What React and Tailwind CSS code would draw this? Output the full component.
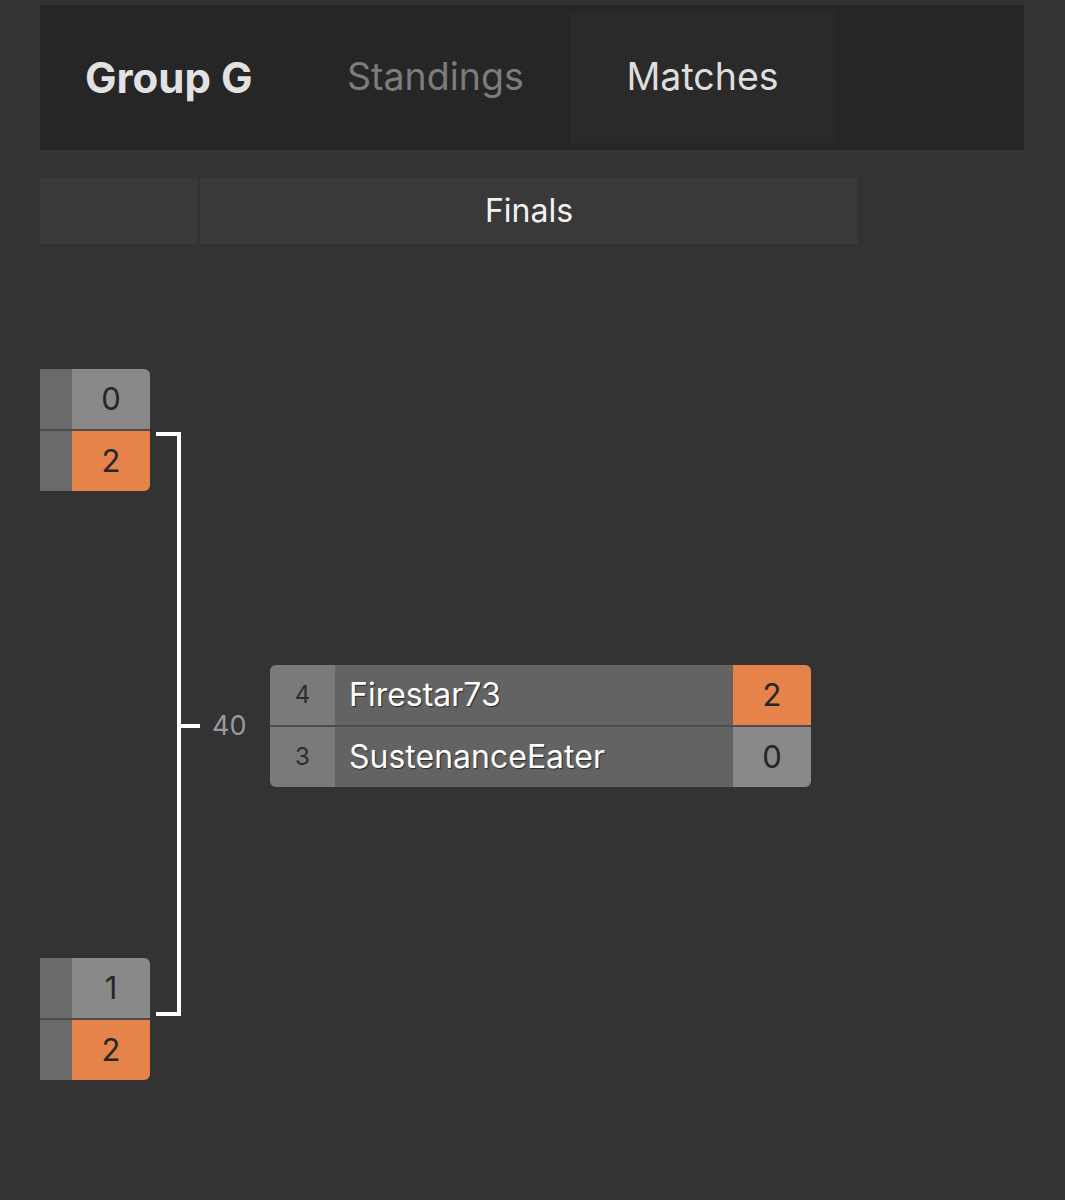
import React from 'react';

const font = { fontFamily: 'Inter, "Noto Sans", "Liberation Sans", sans-serif' };

const SmallMatch = ({ top, bottom }) => (
  <div className="flex flex-col gap-[2px] bg-[#4c4c4c] rounded-r-[6px] overflow-hidden w-[110px]">
    {[top, bottom].map((s, i) => (
      <div key={i} className="flex h-[60px]">
        <div className="w-[32px] bg-[#6a6a6a]" />
        <div
          className={`flex-1 flex items-center justify-center text-[31px] text-[#262626] ${
            s.win ? 'bg-[#e5834a]' : 'bg-[#898989]'
          }`}
        >
          {s.score}
        </div>
      </div>
    ))}
  </div>
);

const players = [
  { seed: 4, name: 'Firestar73', score: 2, win: true },
  { seed: 3, name: 'SustenanceEater', score: 0, win: false },
];

export default function App() {
  return (
    <div className="min-h-[1200px] bg-[#333333] pl-[40px] pr-[41px] pt-[5px]" style={font}>
      {/* Tabs header */}
      <div className="h-[145px] bg-[#262626] flex items-stretch">
        <div className="flex items-center pl-[45px] w-[307px] text-[42px] font-bold text-[#e2e2e2]">
          Group G
        </div>
        <div className="flex items-center w-[223px] text-[37.5px] text-[#7c7c7c]">Standings</div>
        <div className="my-[7px] w-[265px] bg-[#2a2a2a] flex items-center justify-center text-[37.5px] text-[#dedede]">
          Matches
        </div>
      </div>

      {/* Round titles */}
      <div className="mt-[28px] h-[66px] w-[818px] flex gap-[3px]">
        <div className="w-[157px] bg-[#393939]" />
        <div className="flex-1 bg-[#393939] flex items-center justify-center text-[32px] text-[#f2f2f2]">
          Finals
        </div>
      </div>

      {/* Bracket */}
      <div className="flex">
        <div className="flex flex-col pt-[125px] gap-[467px]">
          <SmallMatch top={{ score: 0 }} bottom={{ score: 2, win: true }} />
          <SmallMatch top={{ score: 1 }} bottom={{ score: 2, win: true }} />
        </div>

        <div className="ml-[6px] mt-[188px] h-[584px] flex items-center">
          <div className="h-full w-[25px] border-y-[4px] border-r-[4px] border-white" />
          <div className="w-[19px] h-[4px] mt-[4px] bg-white" />
          <div className="w-[70px] pl-[12px] mt-[4px] text-[27px] text-[#9a9a9a]">40</div>

          <div className="w-[541px] mt-[4px] flex flex-col gap-[2px] bg-[#4c4c4c] rounded-[6px] overflow-hidden">
            {players.map((p) => (
              <div key={p.seed} className="flex h-[60px]">
                <div className="w-[65px] bg-[#7a7a7a] flex items-center justify-center text-[24px] text-[#2c2c2c]">
                  {p.seed}
                </div>
                <div
                  className="flex-1 bg-[#636363] flex items-center pl-[14px] text-[32px] text-white"
                  style={{ textShadow: '1px 1px 1px rgba(0,0,0,0.6)' }}
                >
                  {p.name}
                </div>
                <div
                  className={`w-[78px] flex items-center justify-center text-[31px] text-[#262626] ${
                    p.win ? 'bg-[#e5834a]' : 'bg-[#898989]'
                  }`}
                >
                  {p.score}
                </div>
              </div>
            ))}
          </div>
        </div>
      </div>
    </div>
  );
}
